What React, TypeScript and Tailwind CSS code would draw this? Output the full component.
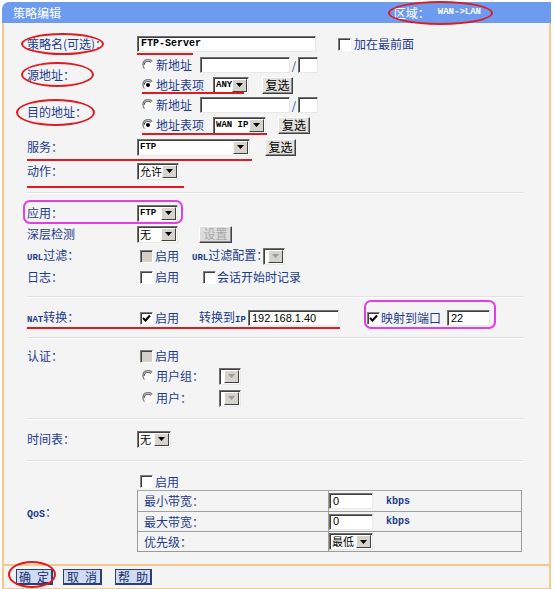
import React from 'react';

const LABEL = 'text-[#1d3b8c]';

function Label({ children, cls = '' }: { children: React.ReactNode; cls?: string }) {
  return <div className={`w-[110px] shrink-0 whitespace-nowrap text-[12px] ${LABEL} ${cls}`}>{children}</div>;
}

function Row({ h, children }: { h: string; children: React.ReactNode }) {
  return <div className={`flex items-center ${h}`}>{children}</div>;
}

function Sep({ h }: { h: string }) {
  return (
    <div className={`flex items-center ${h}`}>
      <div className="h-[2px] w-[496px] bg-[#e1e1e1] border-b border-white" />
    </div>
  );
}

function Input({ w, value, mono }: { w: string; value?: string; mono?: boolean }) {
  return (
    <div
      className={`${w} h-[16px] shrink-0 whitespace-nowrap overflow-hidden bg-white border border-t-[#707070] border-l-[#707070] border-b-[#e8e8e8] border-r-[#e8e8e8] shadow-[inset_1px_1px_0_#404040] pl-[3px] flex items-center leading-none text-black ${
        mono ? "font-['Liberation_Mono',monospace] text-[10px] font-bold" : "font-['Liberation_Sans',sans-serif] text-[11px]"
      }`}
    >
      {value}
    </div>
  );
}

function Arrow({ disabled }: { disabled?: boolean }) {
  return (
    <svg width="7" height="4" viewBox="0 0 7 4">
      <path d="M0 0h7L3.5 4z" fill={disabled ? '#9a9a9a' : '#000'} />
    </svg>
  );
}

function Select({ w, value, disabled, cjk }: { w: string; value?: string; disabled?: boolean; cjk?: boolean }) {
  return (
    <div
      className={`${w} h-[17px] shrink-0 bg-white border border-t-[#707070] border-l-[#707070] border-b-[#e8e8e8] border-r-[#e8e8e8] shadow-[inset_1px_1px_0_#404040] flex items-stretch`}
    >
      <div
        className={`flex-1 min-w-0 whitespace-nowrap flex items-center pl-[2px] leading-none text-black ${
          cjk ? 'text-[11px]' : "font-['Liberation_Mono',monospace] text-[9px] font-bold"
        }`}
      >
        {value}
      </div>
      <div className="w-[15px] shrink-0 m-[1px] bg-[#d6d3cc] border border-t-white border-l-white border-b-[#404040] border-r-[#404040] flex items-center justify-center">
        <Arrow disabled={disabled} />
      </div>
    </div>
  );
}

function Btn({ w, children, disabled }: { w: string; children: React.ReactNode; disabled?: boolean }) {
  return (
    <div
      className={`${w} h-[17px] shrink-0 whitespace-nowrap flex items-center justify-center text-[12px] leading-none border border-t-white border-l-white border-b-[#404040] border-r-[#404040] shadow-[inset_-1px_-1px_0_#8a8a8a] ${
        disabled ? 'bg-[#dcdcdc] text-[#a8a8a8]' : 'bg-[#e4e2de] text-black'
      }`}
    >
      {children}
    </div>
  );
}

function Check({ checked, disabled, cls = '' }: { checked?: boolean; disabled?: boolean; cls?: string }) {
  return (
    <div
      className={`w-[13px] h-[13px] shrink-0 border border-t-[#808080] border-l-[#808080] border-b-white border-r-white shadow-[inset_1px_1px_0_#404040] flex items-center justify-center ${
        disabled ? 'bg-[#d4d0c8]' : 'bg-white'
      } ${cls}`}
    >
      {checked && (
        <svg width="9" height="9" viewBox="0 0 9 9">
          <path d="M1 4l2.5 2.5L8 1.5" stroke="#000" strokeWidth="2" fill="none" />
        </svg>
      )}
    </div>
  );
}

function Radio({ checked, cls = '' }: { checked?: boolean; cls?: string }) {
  return (
    <svg width="12" height="12" viewBox="0 0 12 12" className={`shrink-0 ${cls}`}>
      <circle cx="6" cy="6" r="5" fill="#fff" />
      <path d="M10 2.5A5 5 0 0 0 1 6a5 5 0 0 0 1.5 3.6" stroke="#808080" strokeWidth="1.3" fill="none" />
      <path d="M9 3.5A4 4 0 0 0 2 6" stroke="#404040" strokeWidth="1" fill="none" />
      {checked && <circle cx="6" cy="6" r="2" fill="#000" />}
    </svg>
  );
}

function Txt({ children, cls = '' }: { children: React.ReactNode; cls?: string }) {
  return <span className={`shrink-0 whitespace-nowrap text-[12px] leading-none ${LABEL} ${cls}`}>{children}</span>;
}

function FootBtn({ w, children }: { w: string; children: React.ReactNode }) {
  return (
    <div className={`${w} h-[16px] whitespace-nowrap flex items-center justify-center gap-[6px] bg-[#cfdcf3] border border-[#2a3f78] border-b-2 border-r-2 text-[12px] leading-none text-[#1c2f6b]`}>
      {children}
    </div>
  );
}

const MONO = "font-['Liberation_Mono',monospace] text-[9px] font-bold";

function AddrBlock({ label, labelCls, selW, selVal, gap, btnW }: { label: string; labelCls?: string; selW: string; selVal: string; gap: string; btnW: string }) {
  return (
    <div className="flex items-center">
      <Label cls={labelCls}>{label}</Label>
      <div className="flex flex-col">
        <Row h="h-[20px]">
          <Radio cls="ml-[5px]" />
          <Txt cls="ml-[2px] w-[36px]">新地址</Txt>
          <span className="ml-[8px]"><Input w="w-[90px]" /></span>
          <span className="w-[8px] text-center text-[11px] text-[#1d3b8c]">/</span>
          <Input w="w-[20px]" />
        </Row>
        <Row h="h-[20px]">
          <Radio cls="ml-[5px]" checked />
          <Txt cls="ml-[2px] w-[48px]">地址表项</Txt>
          <span className="ml-[9px]"><Select w={selW} value={selVal} /></span>
          <span className={gap}><Btn w={btnW}>复选</Btn></span>
        </Row>
      </div>
    </div>
  );
}

export default function App() {
  return (
    <div className="relative w-[554px] h-[589px] bg-white font-['Noto_Sans_CJK_SC',sans-serif] text-[12px] overflow-hidden">
      <div className="ml-[2px] mt-[2px] w-[549px] h-[21px] bg-[#6d9cef] rounded-tl-[7px] flex items-center justify-between pl-[11px] pr-[70px] text-white text-[12px]">
        <span>策略编辑</span>
        <span className="flex items-center whitespace-nowrap">
          区域：<span className={`ml-[8px] ${MONO}`}>WAN-&gt;LAN</span>
        </span>
      </div>

      <div className="ml-[2px] w-[549px] border-x-2 border-[#f6c98d] bg-[#f4f4f4] pl-[23px] pt-[10px] pb-[12px]">
        <Row h="h-[22px]">
          <Label>策略名(可选)：</Label>
          <Input w="w-[179px]" value="FTP-Server" mono />
          <Check cls="ml-[22px]" />
          <Txt cls="ml-[3px]">加在最前面</Txt>
        </Row>

        <AddrBlock label="源地址：" selW="w-[36px]" selVal="ANY" gap="ml-[13px]" btnW="w-[31px]" />
        <AddrBlock label="目的地址：" labelCls="pb-[6px]" selW="w-[53px]" selVal="WAN IP" gap="ml-[12px]" btnW="w-[32px]" />

        <Row h="h-[24px]">
          <Label>服务：</Label>
          <Select w="w-[113px]" value="FTP" />
          <span className="ml-[15px]"><Btn w="w-[31px]">复选</Btn></span>
        </Row>
        <Row h="h-[24px]">
          <Label>动作：</Label>
          <Select w="w-[42px]" value="允许" cjk />
        </Row>

        <Sep h="h-[20px]" />

        <Row h="h-[20px]">
          <Label>应用：</Label>
          <Select w="w-[41px]" value="FTP" />
        </Row>
        <Row h="h-[22px]">
          <Label>深层检测</Label>
          <Select w="w-[41px]" value="无" cjk />
          <span className="ml-[21px]"><Btn w="w-[33px]" disabled>设置</Btn></span>
        </Row>
        <Row h="h-[22px]">
          <Label>
            <span className={MONO}>URL</span>过滤：
          </Label>
          <Check cls="ml-[3px]" disabled />
          <Txt cls="ml-[2px] w-[24px]">启用</Txt>
          <Txt cls="ml-[13px] w-[71px]">
            <span className={MONO}>URL</span>过滤配置：
          </Txt>
          <Select w="w-[22px]" disabled />
        </Row>
        <Row h="h-[20px]">
          <Label>日志：</Label>
          <Check cls="ml-[3px]" />
          <Txt cls="ml-[2px] w-[24px]">启用</Txt>
          <Check cls="ml-[24px]" />
          <Txt cls="ml-[1px]">会话开始时记录</Txt>
        </Row>

        <Sep h="h-[20px]" />

        <Row h="h-[22px]">
          <Label>
            <span className={MONO}>NAT</span>转换：
          </Label>
          <Check cls="ml-[3px]" checked />
          <Txt cls="ml-[2px] w-[24px]">启用</Txt>
          <Txt cls="ml-[20px] w-[49px]">
            转换到<span className={MONO}>IP</span>
          </Txt>
          <Input w="w-[91px]" value="192.168.1.40" />
          <Check cls="ml-[28px]" checked />
          <Txt cls="ml-[1px] w-[66px]">映射到端口</Txt>
          <Input w="w-[43px]" value="22" />
        </Row>

        <Sep h="h-[18px]" />

        <Row h="h-[18px]">
          <Label>认证：</Label>
          <Check cls="ml-[3px]" disabled />
          <Txt cls="ml-[2px]">启用</Txt>
        </Row>
        <Row h="h-[22px]">
          <div className="w-[110px]" />
          <Radio cls="ml-[5px]" />
          <Txt cls="ml-[2px] w-[63px]">用户组：</Txt>
          <Select w="w-[22px]" disabled />
        </Row>
        <Row h="h-[22px]">
          <div className="w-[110px]" />
          <Radio cls="ml-[5px]" />
          <Txt cls="ml-[2px] w-[63px]">用户：</Txt>
          <Select w="w-[22px]" disabled />
        </Row>

        <Sep h="h-[20px]" />

        <Row h="h-[20px]">
          <Label>时间表：</Label>
          <Select w="w-[34px]" value="无" cjk />
        </Row>

        <Sep h="h-[24px]" />

        <div className="flex items-center">
          <Label>
            <span className="font-['Liberation_Mono',monospace] text-[10px] font-bold">QoS</span>：
          </Label>
          <div className="flex flex-col">
            <div className="flex items-center h-[17px]">
              <Check cls="ml-[3px]" />
              <Txt cls="ml-[2px]">启用</Txt>
            </div>
            <div className="w-[385px] border border-[#9a9a9a] border-t-[#a8a8a8]">
              {[
                { k: '最小带宽：', v: <Input w="w-[44px]" value="0" />, u: true },
                { k: '最大带宽：', v: <Input w="w-[44px]" value="0" />, u: true },
                { k: '优先级：', v: <Select w="w-[44px]" value="最低" cjk />, u: false },
              ].map((r, i) => (
                <div key={i} className={`flex h-[20px] ${i > 0 ? 'border-t border-[#a0a0a0]' : ''}`}>
                  <div className="w-[191px] border-r border-[#a0a0a0] pl-[6px] flex items-center">
                    <Txt>{r.k}</Txt>
                  </div>
                  <div className="flex items-center">
                    {r.v}
                    {r.u && (
                      <span className="ml-[13px] font-['Liberation_Mono',monospace] text-[10px] font-bold text-[#1d3b8c]">kbps</span>
                    )}
                  </div>
                </div>
              ))}
            </div>
          </div>
        </div>
      </div>

      <div className="ml-[2px] w-[549px] h-[26px] border-2 border-[#f6c98d] bg-[#f4f4f4] flex items-center pl-[12px]">
        <FootBtn w="w-[37px]"><span>确</span><span>定</span></FootBtn>
        <span className="ml-[10px]"><FootBtn w="w-[39px]"><span>取</span><span>消</span></FootBtn></span>
        <span className="ml-[13px]"><FootBtn w="w-[37px]"><span>帮</span><span>助</span></FootBtn></span>
      </div>

      {/* annotations */}
      <div className="absolute left-[388px] top-[1px] w-[105px] h-[24px] rounded-[50%] border-2 border-[#e01a22]" />
      <div className="absolute left-[21px] top-[33px] w-[83px] h-[22px] rounded-[50%] border-2 border-[#e01a22]" />
      <div className="absolute left-[21px] top-[62px] w-[73px] h-[25px] rounded-[50%] border-2 border-[#e01a22]" />
      <div className="absolute left-[16px] top-[99px] w-[79px] h-[27px] rounded-[50%] border-2 border-[#e01a22]" />
      <div className="absolute left-[137px] top-[53px] w-[56px] h-[2px] bg-[#e01a22]" />
      <div className="absolute left-[142px] top-[92px] w-[102px] h-[2px] bg-[#e01a22]" />
      <div className="absolute left-[142px] top-[133px] w-[125px] h-[2px] bg-[#e01a22]" />
      <div className="absolute left-[27px] top-[159px] w-[225px] h-[2px] bg-[#e01a22]" />
      <div className="absolute left-[27px] top-[186px] w-[157px] h-[2px] bg-[#e01a22]" />
      <div className="absolute left-[27px] top-[327px] w-[313px] h-[2px] bg-[#e01a22]" />
      <div className="absolute left-[23px] top-[200px] w-[160px] h-[24px] rounded-[7px] border-2 border-[#e23ee6]" />
      <div className="absolute left-[364px] top-[300px] w-[132px] h-[29px] rounded-[7px] border-2 border-[#e23ee6]" />
      <div className="absolute left-[8px] top-[561px] w-[48px] h-[27px] rounded-[50%] border-2 border-[#e01a22]" />
    </div>
  );
}
